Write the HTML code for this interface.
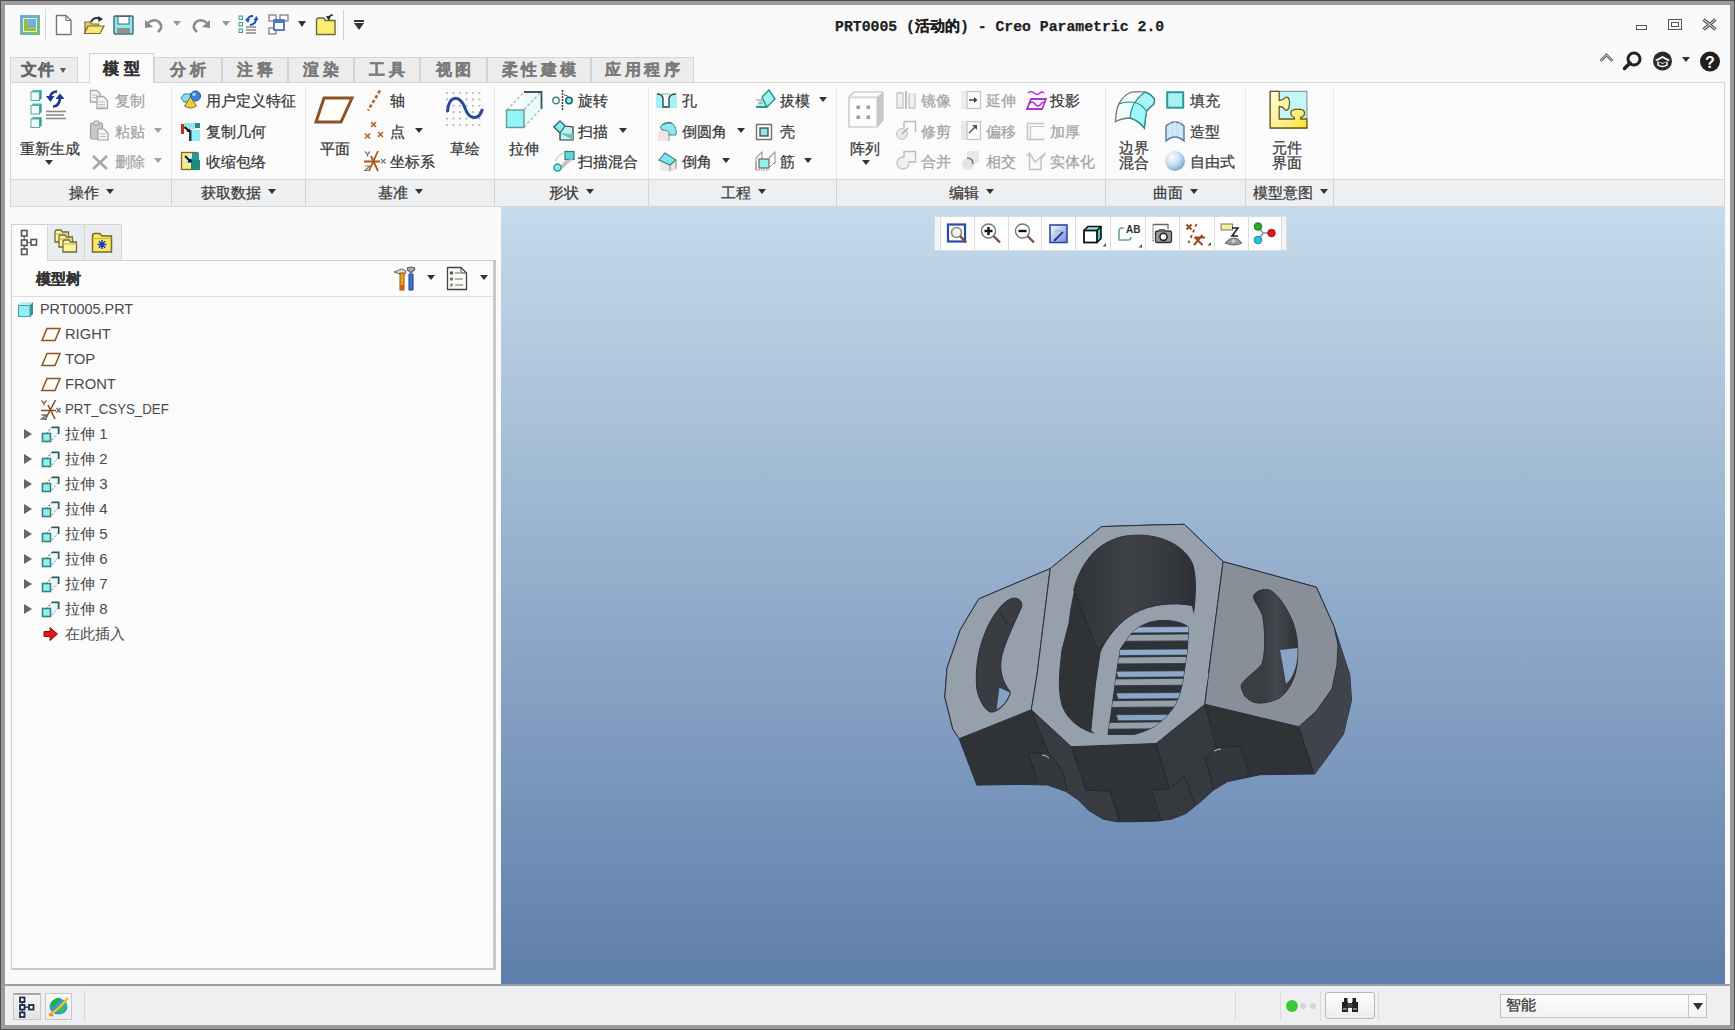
<!DOCTYPE html>
<html><head><meta charset="utf-8">
<style>
*{box-sizing:border-box;margin:0;padding:0}
html,body{width:1735px;height:1030px;overflow:hidden;background:#4f4f4f;font-family:"Liberation Sans",sans-serif;color:#333}
.a{position:absolute}
svg.a{overflow:visible}
.t{position:absolute;white-space:nowrap;font-size:15px;line-height:16px;color:#3a3a3a;-webkit-text-stroke:0.25px currentColor}
.dis{color:#a3a3a3}
.tab{position:absolute;top:57px;height:25px;background:#ececec;border:1px solid #d4d4d4;border-bottom:none;font-size:16px;line-height:23px;text-align:center;color:#7a7a7a;font-weight:bold;letter-spacing:3.5px;padding-left:3.5px;-webkit-text-stroke:0.3px currentColor}
.gl{position:absolute;top:180px;height:26px;font-size:15px;line-height:25px;text-align:center;color:#3a3a3a}
.tr{position:absolute;white-space:nowrap;font-size:15px;line-height:16px;color:#4a4a4a}
</style></head><body>

<div class="a" style="left:1px;top:1px;width:1733px;height:1028px;background:#9b9b9b"></div>
<div class="a" style="left:5px;top:5px;width:1725px;height:1020px;background:#fafafa"></div>
<div class="t" style="left:835px;top:19px;font-family:'Liberation Mono',monospace;font-weight:bold;font-size:14.8px;color:#1e1e1e;letter-spacing:0px">PRT0005 (活动的) - Creo Parametric 2.0</div>
<svg class="a" style="left:19px;top:14px" width="22" height="22" viewBox="0 0 22 22"><defs><linearGradient id="lg1" x1="0" y1="0" x2="1" y2="1"><stop offset="0" stop-color="#6aa8e8"/><stop offset="1" stop-color="#7cc060"/></linearGradient></defs><rect x="1" y="1" width="20" height="20" fill="url(#lg1)"/><rect x="4" y="4" width="14" height="14" fill="#d8f0f0"/><path d="M5 5 h3 v9 h9 v3 h-12z" fill="#90c830"/><rect x="9" y="5" width="8" height="8" fill="#60b8e0"/><path d="M8 13 h9 M8 5 v9" stroke="#e07040" stroke-width="1"/></svg>
<div class="a" style="left:45px;top:9px;width:1px;height:31px;background:#d6d6d6"></div>
<svg class="a" style="left:55px;top:14px" width="18" height="22" viewBox="0 0 18 22"><path d="M1.5 1.5 H11 L16 6.5 V20.5 H1.5 Z" fill="#fff" stroke="#777" stroke-width="1.4"/><path d="M11 1.5 V6.5 H16" fill="none" stroke="#777" stroke-width="1.2"/></svg>
<svg class="a" style="left:83px;top:14px" width="23" height="22" viewBox="0 0 23 22"><path d="M2 8 h5 l1.5 2 h7 v9 h-13.5z" fill="#e8d060" stroke="#7a6a30" stroke-width="1.2"/><path d="M1.5 19.5 L5 12 H21 L17 19.5 Z" fill="#fbe878" stroke="#7a6a30" stroke-width="1.2"/><path d="M8 8 q3 -6 9 -3" fill="none" stroke="#333" stroke-width="2"/><path d="M15 2 l5 3 l-4.5 3z" fill="#333"/></svg>
<svg class="a" style="left:113px;top:15px" width="21" height="20" viewBox="0 0 21 20"><rect x="1" y="1" width="19" height="18" rx="1" fill="#8ee8f0" stroke="#3a6a70" stroke-width="1.4"/><rect x="5" y="1.5" width="11" height="7.5" fill="#fff" stroke="#3a6a70" stroke-width="1"/><rect x="4" y="13" width="13" height="5.5" fill="#909090"/></svg>
<svg class="a" style="left:144px;top:17px" width="21" height="16" viewBox="0 0 21 16"><path d="M4 6 q6 -5 11 -1 q5 5 -1 10" fill="none" stroke="#8a8a8a" stroke-width="2.6"/><path d="M1 3 l0 8 l8 -1 z" fill="#8a8a8a"/></svg>
<div class="a" style="left:173px;top:21px;width:0;height:0;border-left:4.0px solid transparent;border-right:4.0px solid transparent;border-top:5px solid #999"></div>
<svg class="a" style="left:190px;top:17px" width="21" height="16" viewBox="0 0 21 16"><path d="M17 6 q-6 -5 -11 -1 q-5 5 1 10" fill="none" stroke="#8a8a8a" stroke-width="2.6"/><path d="M20 3 l0 8 l-8 -1 z" fill="#8a8a8a"/></svg>
<div class="a" style="left:222px;top:21px;width:0;height:0;border-left:4.0px solid transparent;border-right:4.0px solid transparent;border-top:5px solid #999"></div>
<svg class="a" style="left:238px;top:14px" width="20" height="21" viewBox="0 0 20 21"><g fill="#c8f4f4" stroke="#4a9a9a" stroke-width="1"><rect x="1" y="2" width="3.5" height="3.5"/><rect x="1" y="8.5" width="3.5" height="3.5"/><rect x="1" y="15" width="3.5" height="3.5"/></g><path d="M8 13 h10 M8 16 h10 M8 19 h10" stroke="#888" stroke-width="1.3"/><path d="M9 7 q1 -5 6 -5" fill="none" stroke="#1a50c0" stroke-width="2"/><path d="M7 5 l3 4 l2 -4z" fill="#1a50c0"/><path d="M18 5 q0 5 -6 6" fill="none" stroke="#1a50c0" stroke-width="2"/><path d="M15.5 6 l3 -4 l2 4z" fill="#1a50c0"/></svg>
<svg class="a" style="left:268px;top:14px" width="21" height="21" viewBox="0 0 21 21"><g fill="#fff" stroke="#777" stroke-width="1.2"><rect x="1" y="1" width="7" height="6"/><rect x="12" y="1" width="8" height="6"/><rect x="1" y="14" width="7" height="6"/></g><rect x="6" y="6" width="10" height="10" fill="#fff" stroke="#3a60b0" stroke-width="1.6"/><rect x="6" y="6" width="10" height="3" fill="#4a78d0"/></svg>
<div class="a" style="left:298px;top:21px;width:0;height:0;border-left:4.0px solid transparent;border-right:4.0px solid transparent;border-top:6px solid #333"></div>
<svg class="a" style="left:315px;top:13px" width="22" height="23" viewBox="0 0 22 23"><path d="M1.5 7 q0-2 2-2 h5 l2 2.5 h9.5 v14 h-18.5z" fill="#f8ee70" stroke="#6e6a3a" stroke-width="1.4"/><path d="M13 6 q1 -4 5 -4" fill="none" stroke="#333" stroke-width="1.6"/><path d="M11 3 l3 5 l2 -5z" fill="#333"/></svg>
<div class="a" style="left:343px;top:10px;width:1px;height:30px;background:#d0d0d0"></div>
<div class="a" style="left:354px;top:20px;width:10px;height:1.5px;background:#333"></div>
<div class="a" style="left:354px;top:23px;width:0;height:0;border-left:5.0px solid transparent;border-right:5.0px solid transparent;border-top:7px solid #333"></div>
<div class="a" style="left:1636px;top:25px;width:11px;height:5px;border:1.5px solid #555"></div>
<div class="a" style="left:1668px;top:19px;width:14px;height:11px;border:1.5px solid #555"></div>
<div class="a" style="left:1671px;top:22px;width:8px;height:5px;border:1.5px solid #555"></div>
<svg class="a" style="left:1702px;top:18px" width="15" height="13" viewBox="0 0 15 13"><path d="M1.5 1.5 L13.5 11.5 M13.5 1.5 L1.5 11.5" stroke="#555" stroke-width="3.2"/><path d="M1.5 1.5 L13.5 11.5 M13.5 1.5 L1.5 11.5" stroke="#fafafa" stroke-width="1"/></svg>
<svg class="a" style="left:1599px;top:53px" width="15" height="10" viewBox="0 0 15 10"><path d="M1.5 8 L7.5 2 L13.5 8" fill="none" stroke="#555" stroke-width="2.6"/><path d="M1.5 8 L7.5 2 L13.5 8" fill="none" stroke="#fafafa" stroke-width="0.9"/></svg>
<svg class="a" style="left:1622px;top:51px" width="20" height="20" viewBox="0 0 20 20"><circle cx="12" cy="8" r="6" fill="none" stroke="#222" stroke-width="3"/><path d="M8 12 L2.5 17.5" stroke="#222" stroke-width="3.5" stroke-linecap="round"/></svg>
<svg class="a" style="left:1652px;top:51px" width="21" height="20" viewBox="0 0 21 20"><circle cx="10.5" cy="10" r="9.5" fill="#2a2a2a"/><path d="M3 9 L10.5 5 L18 9 L10.5 13 Z" fill="#fff"/><path d="M6 11 v3 q4.5 3 9 0 v-3" fill="none" stroke="#fff" stroke-width="1.5"/><path d="M5 10 L10.5 7 L16 10 L10.5 12Z" fill="#2a2a2a"/></svg>
<div class="a" style="left:1682px;top:57px;width:0;height:0;border-left:4.0px solid transparent;border-right:4.0px solid transparent;border-top:5px solid #333"></div>
<svg class="a" style="left:1699px;top:51px" width="22" height="21" viewBox="0 0 22 21"><circle cx="11" cy="10.5" r="10" fill="#1e1e1e"/><text x="11" y="16.5" text-anchor="middle" font-family="Liberation Sans" font-weight="bold" font-size="16" fill="#fff">?</text></svg>
<div class="tab" style="left:10px;width:68px;letter-spacing:1px;padding-left:0;text-align:left;padding-left:10px;color:#666">文件</div>
<div class="a" style="left:60px;top:68px;width:0;height:0;border-left:3.5px solid transparent;border-right:3.5px solid transparent;border-top:5px solid #555"></div>
<div class="tab" style="left:154px;width:68px">分析</div>
<div class="tab" style="left:222px;width:66px">注释</div>
<div class="tab" style="left:288px;width:66px">渲染</div>
<div class="tab" style="left:354px;width:66px">工具</div>
<div class="tab" style="left:420px;width:67px">视图</div>
<div class="tab" style="left:487px;width:104px">柔性建模</div>
<div class="tab" style="left:591px;width:103px">应用程序</div>
<div class="a" style="left:10px;top:82px;width:1715px;height:125px;border:1px solid #d6d6d6;background:#fbfbfb"></div>
<div class="a" style="left:11px;top:179px;width:1713px;height:27px;background:#eeeff1;border-top:1px solid #d8d8d8"></div>
<div class="tab" style="left:89px;top:53px;height:30px;width:65px;background:#fbfbfb;color:#333;line-height:30px;border-color:#d0d0d0;letter-spacing:4.5px;padding-left:4.5px">模型</div>
<div class="a" style="left:171px;top:87px;width:1px;height:92px;background:#e8e8e8"></div>
<div class="a" style="left:171px;top:180px;width:1px;height:26px;background:#d2d2d2"></div>
<div class="a" style="left:305px;top:87px;width:1px;height:92px;background:#e8e8e8"></div>
<div class="a" style="left:305px;top:180px;width:1px;height:26px;background:#d2d2d2"></div>
<div class="a" style="left:494px;top:87px;width:1px;height:92px;background:#e8e8e8"></div>
<div class="a" style="left:494px;top:180px;width:1px;height:26px;background:#d2d2d2"></div>
<div class="a" style="left:648px;top:87px;width:1px;height:92px;background:#e8e8e8"></div>
<div class="a" style="left:648px;top:180px;width:1px;height:26px;background:#d2d2d2"></div>
<div class="a" style="left:836px;top:87px;width:1px;height:92px;background:#e8e8e8"></div>
<div class="a" style="left:836px;top:180px;width:1px;height:26px;background:#d2d2d2"></div>
<div class="a" style="left:1105px;top:87px;width:1px;height:92px;background:#e8e8e8"></div>
<div class="a" style="left:1105px;top:180px;width:1px;height:26px;background:#d2d2d2"></div>
<div class="a" style="left:1245px;top:87px;width:1px;height:92px;background:#e8e8e8"></div>
<div class="a" style="left:1245px;top:180px;width:1px;height:26px;background:#d2d2d2"></div>
<div class="a" style="left:1333px;top:87px;width:1px;height:92px;background:#e8e8e8"></div>
<div class="a" style="left:1333px;top:180px;width:1px;height:26px;background:#d2d2d2"></div>
<div class="t " style="left:69px;top:185px;">操作</div>
<div class="a" style="left:106px;top:189px;width:0;height:0;border-left:4.0px solid transparent;border-right:4.0px solid transparent;border-top:5px solid #333"></div>
<div class="t " style="left:201px;top:185px;">获取数据</div>
<div class="a" style="left:268px;top:189px;width:0;height:0;border-left:4.0px solid transparent;border-right:4.0px solid transparent;border-top:5px solid #333"></div>
<div class="t " style="left:378px;top:185px;">基准</div>
<div class="a" style="left:415px;top:189px;width:0;height:0;border-left:4.0px solid transparent;border-right:4.0px solid transparent;border-top:5px solid #333"></div>
<div class="t " style="left:549px;top:185px;">形状</div>
<div class="a" style="left:586px;top:189px;width:0;height:0;border-left:4.0px solid transparent;border-right:4.0px solid transparent;border-top:5px solid #333"></div>
<div class="t " style="left:721px;top:185px;">工程</div>
<div class="a" style="left:758px;top:189px;width:0;height:0;border-left:4.0px solid transparent;border-right:4.0px solid transparent;border-top:5px solid #333"></div>
<div class="t " style="left:949px;top:185px;">编辑</div>
<div class="a" style="left:986px;top:189px;width:0;height:0;border-left:4.0px solid transparent;border-right:4.0px solid transparent;border-top:5px solid #333"></div>
<div class="t " style="left:1153px;top:185px;">曲面</div>
<div class="a" style="left:1190px;top:189px;width:0;height:0;border-left:4.0px solid transparent;border-right:4.0px solid transparent;border-top:5px solid #333"></div>
<div class="t " style="left:1253px;top:185px;">模型意图</div>
<div class="a" style="left:1320px;top:189px;width:0;height:0;border-left:4.0px solid transparent;border-right:4.0px solid transparent;border-top:5px solid #333"></div>
<div class="t " style="left:20px;top:141px;">重新生成</div>
<div class="a" style="left:45px;top:160px;width:0;height:0;border-left:4.0px solid transparent;border-right:4.0px solid transparent;border-top:5px solid #333"></div>
<div class="t dis" style="left:115px;top:93px;">复制</div>
<div class="t dis" style="left:115px;top:124px;">粘贴</div>
<div class="t dis" style="left:115px;top:154px;">删除</div>
<div class="a" style="left:154px;top:128px;width:0;height:0;border-left:4.0px solid transparent;border-right:4.0px solid transparent;border-top:5px solid #a0a0a0"></div>
<div class="a" style="left:154px;top:158px;width:0;height:0;border-left:4.0px solid transparent;border-right:4.0px solid transparent;border-top:5px solid #a0a0a0"></div>
<div class="t " style="left:206px;top:93px;">用户定义特征</div>
<div class="t " style="left:206px;top:124px;">复制几何</div>
<div class="t " style="left:206px;top:154px;">收缩包络</div>
<div class="t " style="left:320px;top:141px;">平面</div>
<div class="t " style="left:390px;top:93px;">轴</div>
<div class="t " style="left:390px;top:124px;">点</div>
<div class="a" style="left:415px;top:128px;width:0;height:0;border-left:4.0px solid transparent;border-right:4.0px solid transparent;border-top:5px solid #333"></div>
<div class="t " style="left:390px;top:154px;">坐标系</div>
<div class="t " style="left:450px;top:141px;">草绘</div>
<div class="t " style="left:509px;top:141px;">拉伸</div>
<div class="t " style="left:578px;top:93px;">旋转</div>
<div class="t " style="left:578px;top:124px;">扫描</div>
<div class="a" style="left:619px;top:128px;width:0;height:0;border-left:4.0px solid transparent;border-right:4.0px solid transparent;border-top:5px solid #333"></div>
<div class="t " style="left:578px;top:154px;">扫描混合</div>
<div class="t " style="left:682px;top:93px;">孔</div>
<div class="t " style="left:682px;top:124px;">倒圆角</div>
<div class="a" style="left:737px;top:128px;width:0;height:0;border-left:4.0px solid transparent;border-right:4.0px solid transparent;border-top:5px solid #333"></div>
<div class="t " style="left:682px;top:154px;">倒角</div>
<div class="a" style="left:722px;top:158px;width:0;height:0;border-left:4.0px solid transparent;border-right:4.0px solid transparent;border-top:5px solid #333"></div>
<div class="t " style="left:780px;top:93px;">拔模</div>
<div class="a" style="left:819px;top:97px;width:0;height:0;border-left:4.0px solid transparent;border-right:4.0px solid transparent;border-top:5px solid #333"></div>
<div class="t " style="left:780px;top:124px;">壳</div>
<div class="t " style="left:780px;top:154px;">筋</div>
<div class="a" style="left:804px;top:158px;width:0;height:0;border-left:4.0px solid transparent;border-right:4.0px solid transparent;border-top:5px solid #333"></div>
<div class="t " style="left:850px;top:141px;">阵列</div>
<div class="a" style="left:862px;top:160px;width:0;height:0;border-left:4.0px solid transparent;border-right:4.0px solid transparent;border-top:5px solid #333"></div>
<div class="t dis" style="left:921px;top:93px;">镜像</div>
<div class="t dis" style="left:921px;top:124px;">修剪</div>
<div class="t dis" style="left:921px;top:154px;">合并</div>
<div class="t dis" style="left:986px;top:93px;">延伸</div>
<div class="t dis" style="left:986px;top:124px;">偏移</div>
<div class="t dis" style="left:986px;top:154px;">相交</div>
<div class="t " style="left:1050px;top:93px;">投影</div>
<div class="t dis" style="left:1050px;top:124px;">加厚</div>
<div class="t dis" style="left:1050px;top:154px;">实体化</div>
<div class="t" style="left:1119px;top:140px;line-height:15px">边界<br>混合</div>
<div class="t " style="left:1190px;top:93px;">填充</div>
<div class="t " style="left:1190px;top:124px;">造型</div>
<div class="t " style="left:1190px;top:154px;">自由式</div>
<div class="t" style="left:1272px;top:140px;line-height:15px">元件<br>界面</div>
<svg class="a" style="left:30px;top:89px" width="40" height="41" viewBox="0 0 40 41"><path d="M1 3 L3 1 H11.5 V9.5 L9.5 11.5 H1 Z" fill="#3cc0b0"/><rect x="1" y="3" width="8.5" height="8.5" fill="#f0fcfc" stroke="#5aa8a8" stroke-width="1"/><path d="M9.5 3 L11.5 1 V9.5 L9.5 11.5Z" fill="#2aa898"/><path d="M1 16.5 L3 14.5 H11.5 V23.0 L9.5 25.0 H1 Z" fill="#3cc0b0"/><rect x="1" y="16.5" width="8.5" height="8.5" fill="#f0fcfc" stroke="#5aa8a8" stroke-width="1"/><path d="M9.5 16.5 L11.5 14.5 V23.0 L9.5 25.0Z" fill="#2aa898"/><path d="M1 30 L3 28 H11.5 V36.5 L9.5 38.5 H1 Z" fill="#3cc0b0"/><rect x="1" y="30" width="8.5" height="8.5" fill="#f0fcfc" stroke="#5aa8a8" stroke-width="1"/><path d="M9.5 30 L11.5 28 V36.5 L9.5 38.5Z" fill="#2aa898"/><path d="M16 22.5 H36 M16 26 H34 M16 29.5 H36" stroke="#888" stroke-width="1.4"/><path d="M27 2.5 q-6 0 -7 6" fill="none" stroke="#1a3a90" stroke-width="2.6"/><path d="M16 7 l4.5 6 l4 -6z" fill="#1a3a90"/><path d="M23 17.5 q6 0 7 -8" fill="none" stroke="#1a3a90" stroke-width="2.6"/><path d="M25.5 10 l4.5 -5.5 l4.5 5.5z" fill="#1a3a90"/></svg>
<svg class="a" style="left:89px;top:89px" width="21" height="21" viewBox="0 0 21 21"><path d="M1.5 1.5 H8 L11 4.5 V13 H1.5 Z" fill="#f4f4f4" stroke="#a8a8a8" stroke-width="1.3"/><path d="M3.5 6 h5 M3.5 8.5 h5" stroke="#bbb" stroke-width="1"/><path d="M8 7.5 H14.5 L18.5 11.5 V19.5 H8 Z" fill="#f4f4f4" stroke="#a8a8a8" stroke-width="1.3"/><path d="M10 13 h6 M10 15.5 h6 M10 18 h6" stroke="#bbb" stroke-width="1"/></svg>
<svg class="a" style="left:89px;top:120px" width="21" height="21" viewBox="0 0 21 21"><rect x="1.5" y="3" width="12" height="16" rx="1.5" fill="#c8c8c8" stroke="#a0a0a0" stroke-width="1.2"/><rect x="5" y="1" width="5" height="4" rx="1" fill="#ddd" stroke="#999" stroke-width="1"/><path d="M9 9 H15 L19 13 V20 H9 Z" fill="#f6f6f6" stroke="#a0a0a0" stroke-width="1.2"/><path d="M11 14 h6 M11 16.5 h6" stroke="#bbb" stroke-width="1"/></svg>
<svg class="a" style="left:91px;top:154px" width="19" height="17" viewBox="0 0 19 17"><path d="M2 2 L16 15 M16 2 L2 15" stroke="#a6a6a6" stroke-width="2.4"/></svg>
<svg class="a" style="left:180px;top:90px" width="22" height="20" viewBox="0 0 22 20"><path d="M1 8 L4 4 H11 L14 8 L11 12 H4 Z" fill="#7ee0e8" stroke="#3a8a90" stroke-width="1"/><circle cx="15.5" cy="6" r="5" fill="#3a80e0" stroke="#1a4a90" stroke-width="1"/><circle cx="14" cy="4.5" r="1.8" fill="#a0d0ff"/><path d="M10.5 7 L4.5 16 Q10.5 20 16.5 16 Z" fill="#e8d040" stroke="#7a6a20" stroke-width="1"/></svg>
<svg class="a" style="left:180px;top:121px" width="22" height="21" viewBox="0 0 22 21"><rect x="1" y="3" width="3" height="10" fill="#c03020"/><rect x="4" y="2" width="11" height="6" fill="#8ee8ee"/><rect x="15" y="2" width="5" height="5" fill="#2a8a80"/><rect x="9" y="9" width="11" height="11" fill="#90eef4"/><rect x="9" y="9" width="2.5" height="11" fill="#2a4040"/><path d="M4.5 6 L9 10" stroke="#111" stroke-width="2"/><path d="M6.5 11 L10 11 L10 7.5z" fill="#111"/></svg>
<svg class="a" style="left:180px;top:151px" width="22" height="21" viewBox="0 0 22 21"><rect x="1.5" y="1.5" width="16" height="17" fill="#f8ec80" stroke="#7a6a30" stroke-width="1.3"/><rect x="5" y="4" width="10" height="9" fill="#cdf4f4"/><rect x="12" y="2" width="7" height="7" fill="#2a9a90"/><rect x="11" y="9" width="9" height="10" fill="#1f8a80"/><path d="M5 5 L10.5 10.5" stroke="#111" stroke-width="2"/><path d="M7 11.5 L11.5 11.5 L11.5 7z" fill="#111"/></svg>
<svg class="a" style="left:313px;top:95px" width="42" height="30" viewBox="0 0 42 30"><path d="M11 3 H39 L28 27 H3 Z" fill="#fffdf6" stroke="#8a5428" stroke-width="3"/></svg>
<svg class="a" style="left:365px;top:89px" width="18" height="23" viewBox="0 0 18 23"><path d="M15 1.5 L3 21.5" stroke="#b86a30" stroke-width="2.6" stroke-dasharray="3.5 2"/></svg>
<svg class="a" style="left:364px;top:121px" width="22" height="21" viewBox="0 0 22 21"><g stroke="#b8642a" stroke-width="1.7"><path d="M7 1 l5 5 M12 1 l-5 5 M1 12.5 l5 5 M6 12.5 l-5 5 M14 11 l5 5 M19 11 l-5 5"/></g></svg>
<svg class="a" style="left:363px;top:150px" width="24" height="22" viewBox="0 0 24 22"><g stroke="#a85a20" stroke-width="1.8" fill="none"><path d="M1 11.5 H17 M15 1 L6 21 M8 6 L15 21"/></g><g stroke="#777" stroke-width="1.2" fill="none"><path d="M2 1.5 l2.5 3 l2.5 -3 M4.5 4.5 v2 M2 16 h5 l-5 4.5 h5 M18 9 l4.5 4.5 M22.5 9 l-4.5 4.5"/></g></svg>
<svg class="a" style="left:445px;top:91px" width="40" height="37" viewBox="0 0 40 37"><circle cx="2.0" cy="2.0" r="1.1" fill="#b8b8b8"/><circle cx="8.5" cy="2.0" r="1.1" fill="#b8b8b8"/><circle cx="15.0" cy="2.0" r="1.1" fill="#b8b8b8"/><circle cx="21.5" cy="2.0" r="1.1" fill="#b8b8b8"/><circle cx="28.0" cy="2.0" r="1.1" fill="#b8b8b8"/><circle cx="34.5" cy="2.0" r="1.1" fill="#b8b8b8"/><circle cx="2.0" cy="8.4" r="1.1" fill="#b8b8b8"/><circle cx="8.5" cy="8.4" r="1.1" fill="#b8b8b8"/><circle cx="15.0" cy="8.4" r="1.1" fill="#b8b8b8"/><circle cx="21.5" cy="8.4" r="1.1" fill="#b8b8b8"/><circle cx="28.0" cy="8.4" r="1.1" fill="#b8b8b8"/><circle cx="34.5" cy="8.4" r="1.1" fill="#b8b8b8"/><circle cx="2.0" cy="14.8" r="1.1" fill="#b8b8b8"/><circle cx="8.5" cy="14.8" r="1.1" fill="#b8b8b8"/><circle cx="15.0" cy="14.8" r="1.1" fill="#b8b8b8"/><circle cx="21.5" cy="14.8" r="1.1" fill="#b8b8b8"/><circle cx="28.0" cy="14.8" r="1.1" fill="#b8b8b8"/><circle cx="34.5" cy="14.8" r="1.1" fill="#b8b8b8"/><circle cx="2.0" cy="21.200000000000003" r="1.1" fill="#b8b8b8"/><circle cx="8.5" cy="21.200000000000003" r="1.1" fill="#b8b8b8"/><circle cx="15.0" cy="21.200000000000003" r="1.1" fill="#b8b8b8"/><circle cx="21.5" cy="21.200000000000003" r="1.1" fill="#b8b8b8"/><circle cx="28.0" cy="21.200000000000003" r="1.1" fill="#b8b8b8"/><circle cx="34.5" cy="21.200000000000003" r="1.1" fill="#b8b8b8"/><circle cx="2.0" cy="27.6" r="1.1" fill="#b8b8b8"/><circle cx="8.5" cy="27.6" r="1.1" fill="#b8b8b8"/><circle cx="15.0" cy="27.6" r="1.1" fill="#b8b8b8"/><circle cx="21.5" cy="27.6" r="1.1" fill="#b8b8b8"/><circle cx="28.0" cy="27.6" r="1.1" fill="#b8b8b8"/><circle cx="34.5" cy="27.6" r="1.1" fill="#b8b8b8"/><circle cx="2.0" cy="34.0" r="1.1" fill="#b8b8b8"/><circle cx="8.5" cy="34.0" r="1.1" fill="#b8b8b8"/><circle cx="15.0" cy="34.0" r="1.1" fill="#b8b8b8"/><circle cx="21.5" cy="34.0" r="1.1" fill="#b8b8b8"/><circle cx="28.0" cy="34.0" r="1.1" fill="#b8b8b8"/><circle cx="34.5" cy="34.0" r="1.1" fill="#b8b8b8"/><path d="M2.5 21 C4 2, 16 5, 20 17 S 34 30, 37.5 18" fill="none" stroke="#2a4a98" stroke-width="3"/></svg>
<svg class="a" style="left:504px;top:90px" width="40" height="40" viewBox="0 0 40 40"><path d="M20 1.5 H37.5 V19 L19.5 37" fill="#e4fafc" opacity=".8"/><path d="M3 20 L20 2 M20 19.5 L37 2 M20 37 L37 19" stroke="#b0b0b0" stroke-width="1.2" stroke-dasharray="3 2" fill="none"/><path d="M20 2 H37.5 V19" fill="none" stroke="#3a5656" stroke-width="1.8"/><rect x="2.5" y="20" width="17.5" height="17.5" fill="#94f4f6" stroke="#6a9898" stroke-width="1.4"/></svg>
<svg class="a" style="left:552px;top:90px" width="22" height="21" viewBox="0 0 22 21"><path d="M10.5 0 V21" stroke="#333" stroke-width="1.4" stroke-dasharray="2 1"/><circle cx="4" cy="10.5" r="3.2" fill="#fff" stroke="#3a8080" stroke-width="1.4"/><circle cx="17" cy="10.5" r="3.2" fill="#8ee8ee" stroke="#1a6a6a" stroke-width="1.6"/><path d="M12 5 q4 0 5 3" fill="none" stroke="#555" stroke-width="1"/></svg>
<svg class="a" style="left:553px;top:120px" width="23" height="22" viewBox="0 0 23 22"><path d="M1 7 L7 1 L12 6 L20 7 V20 L7 20 V13 Z" fill="#bff2f4" stroke="#333" stroke-width="1.2"/><path d="M7 13 L20 20 V14Z" fill="#70c0b8"/><path d="M1 7 L7 13 L12 6" fill="#d8c8c8" opacity=".6"/><path d="M1 7 L7 1 L12 6 L7 13 Z" fill="#8ee8ee" stroke="#2a7070" stroke-width="1.2"/></svg>
<svg class="a" style="left:553px;top:150px" width="23" height="22" viewBox="0 0 23 22"><rect x="12" y="1.5" width="9" height="8" fill="#60d8d8" stroke="#2a8080" stroke-width="1.2"/><path d="M4 19 L13 10 L20 9 L8 20Z" fill="#c8c0c0"/><circle cx="4.5" cy="17.5" r="3.5" fill="#8ee8ee" stroke="#2aa0a0" stroke-width="1.5"/><path d="M2 11 q5 -8 10 -8" stroke="#bbb" fill="none" stroke-width="1"/></svg>
<svg class="a" style="left:656px;top:92px" width="22" height="17" viewBox="0 0 22 17"><rect x="0" y="2" width="21" height="14" fill="#a8f0f4"/><path d="M1 2 Q6 2 7 6 V15 H13 V6 Q14 2 20 2" fill="#f8fdfd" stroke="#2a4a50" stroke-width="1.4"/><path d="M6 2 H14" stroke="#666" stroke-width="1" stroke-dasharray="1.5 1"/></svg>
<svg class="a" style="left:656px;top:121px" width="22" height="21" viewBox="0 0 22 21"><path d="M2 20 V12 Q3 9 6 8 L13 13 Q12 16 12 20 Z" fill="#efe8e2"/><path d="M4 6 Q10 0 17 3 Q21 7 20 14 L13 14 Q14 9 6 9 Z" fill="#90e8ee" stroke="#3a8a8a" stroke-width="1"/><path d="M6 4 Q11 0 16 2" fill="none" stroke="#3a8a8a" stroke-width="1.1"/><path d="M13 14 V20" stroke="#999" stroke-width="1"/></svg>
<svg class="a" style="left:656px;top:151px" width="22" height="21" viewBox="0 0 22 21"><path d="M4 20 V9 L9 4 L20 12 V20 Z" fill="#f0e8e4"/><path d="M3 9 L9 2 L20 9 L14 14 Z" fill="#80e4ec" stroke="#3a8080" stroke-width="1.1"/><path d="M14 14 V20 M20 9 V18" stroke="#888" stroke-width="1"/></svg>
<svg class="a" style="left:754px;top:89px" width="22" height="21" viewBox="0 0 22 21"><path d="M2 18 L8 8 L15 1 L21 10 L13 18 Z" fill="#a8f0f0"/><path d="M8 8 L15 1 L21 10 L13 18 L8 8" fill="none" stroke="#2a9a90" stroke-width="1.5"/><path d="M2 18 H13" stroke="#2a9a90" stroke-width="2"/><path d="M2 11 H8 M4 14 H9" stroke="#e07070" stroke-width="1"/></svg>
<svg class="a" style="left:755px;top:123px" width="19" height="18" viewBox="0 0 19 18"><rect x="1.5" y="1.5" width="15" height="15" fill="#fff" stroke="#777" stroke-width="1.5"/><rect x="5" y="5" width="8" height="8" fill="#8ee8ee" stroke="#444" stroke-width="1.3"/></svg>
<svg class="a" style="left:755px;top:150px" width="22" height="22" viewBox="0 0 22 22"><path d="M1 20 V8 L7 2 V14 M20 14 V2 L14 8" fill="none" stroke="#999" stroke-width="1.1"/><rect x="4" y="9" width="10" height="9" fill="#8ef0f0" stroke="#666" stroke-width="1.2"/><path d="M14 18 L20 12" stroke="#999" stroke-width="1"/><path d="M1 20 H14 M1 12 V20" stroke="#c06060" stroke-width="1" stroke-dasharray="1.5 1"/></svg>
<svg class="a" style="left:844px;top:86px" width="46" height="46" viewBox="0 0 46 46"><path d="M5 11 L10 6 H39 V34 L33 41 H5 Z" fill="#fdfdfd" stroke="#bdbdbd" stroke-width="1.2"/><path d="M33 11 L39 6 V34 L33 41 Z" fill="#c6c6c6"/><path d="M7 11 H33 V13 H7Z" fill="#eeeeee"/><path d="M5 11 H33 V41" fill="none" stroke="#c8c8c8" stroke-width="1"/><g fill="#9a9a9a"><rect x="12.5" y="19.5" width="3.5" height="3.5"/><rect x="22.5" y="19.5" width="3.5" height="3.5"/><rect x="12.5" y="29.5" width="3.5" height="3.5"/><rect x="22.5" y="29.5" width="3.5" height="3.5"/></g></svg>
<svg class="a" style="left:896px;top:90px" width="21" height="20" viewBox="0 0 21 20"><path d="M1 3 V18 H7 L7 3 Z M19 3 V18 H13 L13 3" fill="#f0f0f0" stroke="#c4c4c4" stroke-width="1.3"/><path d="M10 1 V19" stroke="#aaa" stroke-width="1.5"/></svg>
<svg class="a" style="left:896px;top:120px" width="21" height="21" viewBox="0 0 21 21"><circle cx="6" cy="14" r="5.5" fill="#e8e8e8" stroke="#c4c4c4" stroke-width="1"/><path d="M8 1.5 H19.5 V12 M8 1.5 V8" fill="none" stroke="#bbb" stroke-width="1.4"/><path d="M6 14 L12 8" stroke="#aaa" stroke-width="1.2"/></svg>
<svg class="a" style="left:896px;top:150px" width="21" height="21" viewBox="0 0 21 21"><circle cx="7" cy="13" r="6" fill="#f0f0f0" stroke="#c4c4c4" stroke-width="1.3"/><path d="M8 7 V1.5 H19.5 V12 H13" fill="#f6f6f6" stroke="#bbb" stroke-width="1.3"/></svg>
<svg class="a" style="left:960px;top:90px" width="22" height="20" viewBox="0 0 22 20"><rect x="1" y="1" width="8" height="18" fill="#eee"/><rect x="7" y="1.5" width="13.5" height="17" fill="#fbfbfb" stroke="#c4c4c4" stroke-width="1.2"/><path d="M9 10 H15" stroke="#444" stroke-width="1.5"/><path d="M14 7 L17.5 10 L14 13Z" fill="#444"/></svg>
<svg class="a" style="left:960px;top:120px" width="22" height="21" viewBox="0 0 22 21"><rect x="1" y="1" width="9" height="19" fill="#e8e8e8"/><rect x="7" y="1.5" width="13.5" height="18" fill="#fbfbfb" stroke="#c4c4c4" stroke-width="1.2"/><path d="M9 13 L15 7" stroke="#555" stroke-width="1.5"/><path d="M12 5 H17 V10Z" fill="#555"/></svg>
<svg class="a" style="left:960px;top:150px" width="22" height="21" viewBox="0 0 22 21"><rect x="7" y="1" width="12" height="12" fill="#e8e8e8"/><circle cx="8" cy="14" r="6" fill="#e4e4e4"/><path d="M7 8 q6 0 6 6" fill="none" stroke="#777" stroke-width="1.6"/></svg>
<svg class="a" style="left:1025px;top:90px" width="22" height="21" viewBox="0 0 22 21"><path d="M3 3 q3 -3 6 0 q3 3 6 0 q2 -2 4 0" fill="none" stroke="#b030d0" stroke-width="1.6"/><path d="M6 9 L2 19 H17 L21 9 Z" fill="none" stroke="#b030d0" stroke-width="1.8"/><path d="M4 14 q3 -4 6 0 q3 4 6 0 q2 -3 4 -1" fill="none" stroke="#b030d0" stroke-width="1.5"/></svg>
<svg class="a" style="left:1026px;top:122px" width="20" height="19" viewBox="0 0 20 19"><path d="M1.5 17.5 V1.5 H18.5" fill="none" stroke="#c4c4c4" stroke-width="1.6"/><path d="M4.5 17.5 V4.5 H18.5" fill="none" stroke="#c4c4c4" stroke-width="1.2"/><path d="M1.5 17.5 H18.5" stroke="#c4c4c4" stroke-width="1.6"/></svg>
<svg class="a" style="left:1025px;top:151px" width="22" height="20" viewBox="0 0 22 20"><path d="M1.5 5 L4.5 2 V18.5 H16 V8 L20.5 2 L17 5 L10 11 L4.5 2" fill="#f8f8f8" stroke="#c4c4c4" stroke-width="1.5"/></svg>
<svg class="a" style="left:1110px;top:86px" width="50" height="46" viewBox="0 0 50 46"><path d="M5.4 35.7 Q6 24 8.9 17.9 Q14 8 22.3 5.8 H34.8 Q41 8 44.6 13.4 L43.8 17.9 Q39 22 36.6 25 Q35 34 34.4 42 Q28 34 20 32 Q12 32 5.4 35.7Z" fill="#eefcfc" stroke="#777" stroke-width="1.3"/><path d="M25 16.5 Q29 10 34.8 6.5 Q41 8 44.6 13.4 L43.8 17.9 Q39 22 36.6 25 Q31 18 25 16.5Z" fill="#a6f4f6"/><path d="M25 16.5 Q31 18 36.6 25 Q35 34 34.4 42 Q28 34 20 32 Q21 22 25 16.5Z" fill="#a0f6f8"/><path d="M8.9 17.9 Q16 15 25 16.5 Q31 18 36.6 25 M34.8 6.5 Q29 10 25 16.5 Q21 22 20 32" fill="none" stroke="#2a8a8a" stroke-width="1.2"/><path d="M34.8 5.8 Q41 8 44.6 13.4 L43.8 17.9 Q39 22 36.6 25 Q35 34 34.4 42 Q28 34 20 32" fill="none" stroke="#2a8a8a" stroke-width="1.3"/></svg>
<svg class="a" style="left:1166px;top:91px" width="19" height="18" viewBox="0 0 19 18"><rect x="1.2" y="1.2" width="16" height="15.5" fill="#a8f2f4" stroke="#2a9a9a" stroke-width="2"/></svg>
<svg class="a" style="left:1164px;top:120px" width="23" height="22" viewBox="0 0 23 22"><path d="M2 6 Q11 -2 20 6 V21 Q11 13 2 21 Z" fill="#c8e4f4" stroke="#5a7a9a" stroke-width="1.4"/><path d="M6 3 V17 M11 2 V15 M16 3 V17" stroke="#fff" stroke-width="1" stroke-dasharray="1 1.5"/></svg>
<svg class="a" style="left:1164px;top:150px" width="22" height="22" viewBox="0 0 22 22"><defs><radialGradient id="sph" cx=".35" cy=".3" r=".8"><stop offset="0" stop-color="#ffffff"/><stop offset=".55" stop-color="#c0d8f0"/><stop offset="1" stop-color="#6a9ad0"/></radialGradient></defs><circle cx="11" cy="11" r="10" fill="url(#sph)"/></svg>
<svg class="a" style="left:1264px;top:86px" width="50" height="46" viewBox="0 0 50 46"><defs><linearGradient id="ylg" x1="0" y1="0" x2="1" y2="1"><stop offset="0" stop-color="#fffbd8"/><stop offset=".6" stop-color="#fff08a"/><stop offset="1" stop-color="#ffe420"/></linearGradient></defs><rect x="6.2" y="5.4" width="36.7" height="36.6" fill="#c4f6fa" stroke="#8a9aa0" stroke-width="1.2"/><path d="M6.2 5.4 H15.2 V14.5 Q20 13.5 20 12.5 Q22 10.5 24 11.5 Q26 14 25.5 17.5 Q25.5 22 23.5 24 Q21 25 19.5 22 Q18 20.5 15.2 20.5 V33 H30.5 Q31 31.5 28 30 Q25.5 27 28 24.5 Q33 22 39 24 Q41.5 26 40 29.5 Q38.5 31 36.6 31.5 V33 H42.9 V42 H6.2 Z" fill="url(#ylg)" stroke="#6a5a20" stroke-width="1.3" stroke-linejoin="round"/></svg>
<div class="a" style="left:11px;top:224px;width:37px;height:37px;background:#fbfbfb;border:1px solid #d0d0d0;border-bottom:none"></div>
<div class="a" style="left:47px;top:224px;width:38px;height:36px;background:#ebecef;border:1px solid #d6d6d6;border-bottom:none"></div>
<div class="a" style="left:84px;top:224px;width:38px;height:36px;background:#ebecef;border:1px solid #d6d6d6;border-bottom:none"></div>
<div class="a" style="left:11px;top:260px;width:485px;height:710px;border:1px solid #d0d0d0;border-right:3px solid #c8c8c8;border-bottom:2px solid #c8c8c8;background:#fbfbfb"></div>
<div class="a" style="left:12px;top:260px;width:35px;height:2px;background:#fbfbfb"></div>
<div class="a" style="left:12px;top:296px;width:481px;height:1px;background:#dcdcdc"></div>
<div class="t" style="left:36px;top:271px;font-weight:bold;color:#333">模型树</div>
<div class="tr" style="left:40px;top:301px;transform:scaleX(0.96);transform-origin:0 0;">PRT0005.PRT</div>
<div class="tr" style="left:65px;top:326px;transform:scaleX(0.98);transform-origin:0 0;">RIGHT</div>
<div class="tr" style="left:65px;top:351px;transform:scaleX(0.99);transform-origin:0 0;">TOP</div>
<div class="tr" style="left:65px;top:376px;transform:scaleX(0.985);transform-origin:0 0;">FRONT</div>
<div class="tr" style="left:65px;top:401px;transform:scaleX(0.885);transform-origin:0 0;">PRT_CSYS_DEF</div>
<div class="tr" style="left:65px;top:426px;">拉伸 1</div>
<div class="a" style="left:24px;top:429px;width:0;height:0;border-top:5px solid transparent;border-bottom:5px solid transparent;border-left:8px solid #666"></div>
<div class="tr" style="left:65px;top:451px;">拉伸 2</div>
<div class="a" style="left:24px;top:454px;width:0;height:0;border-top:5px solid transparent;border-bottom:5px solid transparent;border-left:8px solid #666"></div>
<div class="tr" style="left:65px;top:476px;">拉伸 3</div>
<div class="a" style="left:24px;top:479px;width:0;height:0;border-top:5px solid transparent;border-bottom:5px solid transparent;border-left:8px solid #666"></div>
<div class="tr" style="left:65px;top:501px;">拉伸 4</div>
<div class="a" style="left:24px;top:504px;width:0;height:0;border-top:5px solid transparent;border-bottom:5px solid transparent;border-left:8px solid #666"></div>
<div class="tr" style="left:65px;top:526px;">拉伸 5</div>
<div class="a" style="left:24px;top:529px;width:0;height:0;border-top:5px solid transparent;border-bottom:5px solid transparent;border-left:8px solid #666"></div>
<div class="tr" style="left:65px;top:551px;">拉伸 6</div>
<div class="a" style="left:24px;top:554px;width:0;height:0;border-top:5px solid transparent;border-bottom:5px solid transparent;border-left:8px solid #666"></div>
<div class="tr" style="left:65px;top:576px;">拉伸 7</div>
<div class="a" style="left:24px;top:579px;width:0;height:0;border-top:5px solid transparent;border-bottom:5px solid transparent;border-left:8px solid #666"></div>
<div class="tr" style="left:65px;top:601px;">拉伸 8</div>
<div class="a" style="left:24px;top:604px;width:0;height:0;border-top:5px solid transparent;border-bottom:5px solid transparent;border-left:8px solid #666"></div>
<div class="tr" style="left:65px;top:626px;">在此插入</div>
<svg class="a" style="left:20px;top:229px" width="19" height="27" viewBox="0 0 19 27"><g fill="#fff" stroke="#555" stroke-width="1.6"><rect x="1.5" y="1.5" width="5.5" height="5.5"/><rect x="1.5" y="11" width="5.5" height="5.5"/><rect x="1.5" y="20" width="5.5" height="5.5"/><rect x="11" y="10.5" width="5.5" height="5.5"/></g><path d="M4.2 7 V11 M4.2 16.5 V20 M7 13.5 H11" stroke="#555" stroke-width="1.2"/></svg>
<svg class="a" style="left:54px;top:229px" width="24" height="26" viewBox="0 0 24 26"><path d="M1 3 q0-2 2-2 h4 l1.5 2 h6 v10 h-13.5 z" fill="#fdf59a" stroke="#6e6a3a" stroke-width="1.3"/><path d="M1 5 h13.5" stroke="#b8b060" stroke-width="1"/><path d="M5 8 q0-2 2-2 h4 l1.5 2 h6 v10 h-13.5 z" fill="#fdf59a" stroke="#6e6a3a" stroke-width="1.3"/><path d="M5 10 h13.5" stroke="#b8b060" stroke-width="1"/><path d="M9 13 q0-2 2-2 h4 l1.5 2 h6 v10 h-13.5 z" fill="#fdf59a" stroke="#6e6a3a" stroke-width="1.3"/><path d="M9 15 h13.5" stroke="#b8b060" stroke-width="1"/></svg>
<svg class="a" style="left:91px;top:232px" width="24" height="22" viewBox="0 0 24 22"><path d="M1.5 4 q0-2.5 2.5-2.5 h5 l2 2.5 h9.5 v16 h-19 z" fill="#fbe85a" stroke="#6e6a3a" stroke-width="1.5"/><path d="M1.5 6.5 h19" stroke="#c8b840" stroke-width="1"/><g stroke="#1a3ad0" stroke-width="1.5"><path d="M11 8 v9 M6.5 12.5 h9 M7.8 9.3 l6.4 6.4 M14.2 9.3 l-6.4 6.4"/></g><circle cx="11" cy="12.5" r="2" fill="#1a3ad0"/></svg>
<svg class="a" style="left:392px;top:265px" width="26" height="27" viewBox="0 0 26 27"><path d="M2 7 L10 4 L14 6 L13 9 L8 9 Z" fill="#ddd" stroke="#666" stroke-width="1"/><rect x="8" y="8" width="4" height="17" fill="#f4a020" stroke="#8a5a10" stroke-width="1"/><rect x="8.5" y="20" width="3" height="5" fill="#e05010"/><path d="M17 9 V25 h4 V9" fill="#3a78d8" stroke="#1a3a80" stroke-width="1"/><path d="M15 3 q4 -2 8 0 l-1 3 h-2 v3 h-2 v-3 h-2 z" fill="#aaa" stroke="#555" stroke-width="1"/></svg>
<div class="a" style="left:427px;top:275px;border-left:4px solid transparent;border-right:4px solid transparent;border-top:5px solid #333"></div>
<svg class="a" style="left:446px;top:266px" width="22" height="25" viewBox="0 0 22 25"><path d="M1.5 1.5 H15 L20.5 7 V23.5 H1.5 Z" fill="#fcfcf4" stroke="#444" stroke-width="1.3"/><path d="M15 1.5 V7 H20.5" fill="none" stroke="#444" stroke-width="1"/><circle cx="5.5" cy="7" r="1.8" fill="#555"/><circle cx="5.5" cy="13" r="1.8" fill="#777"/><circle cx="5.5" cy="19" r="1.8" fill="#999"/><path d="M9 7 h5 M9 13 h8 M9 19 h8" stroke="#666" stroke-width="1.2"/></svg>
<div class="a" style="left:480px;top:275px;border-left:4px solid transparent;border-right:4px solid transparent;border-top:5px solid #333"></div>
<svg class="a" style="left:17px;top:301px" width="17" height="17" viewBox="0 0 17 17"><path d="M1 4 L4 1 H16 V13 L13 16 H1 Z" fill="#7ad8e0"/><path d="M13 4 L16 1 V13 L13 16 Z" fill="#3d8d96"/><path d="M1 4 L4 1 H16 L13 4 Z" fill="#b8f0f4"/><rect x="1.5" y="4.5" width="11.5" height="11" fill="#90eef4" stroke="#4a9aa0" stroke-width="1"/></svg>
<svg class="a" style="left:41px;top:327px" width="20" height="15" viewBox="0 0 20 15"><path d="M6 1.5 H19 L14 13.5 H1 Z" fill="#fffcf6" stroke="#8a5428" stroke-width="1.5"/></svg>
<svg class="a" style="left:41px;top:352px" width="20" height="15" viewBox="0 0 20 15"><path d="M6 1.5 H19 L14 13.5 H1 Z" fill="#fffcf6" stroke="#8a5428" stroke-width="1.5"/></svg>
<svg class="a" style="left:41px;top:377px" width="20" height="15" viewBox="0 0 20 15"><path d="M6 1.5 H19 L14 13.5 H1 Z" fill="#fffcf6" stroke="#8a5428" stroke-width="1.5"/></svg>
<svg class="a" style="left:40px;top:399px" width="22" height="22" viewBox="0 0 22 22"><g stroke="#8a5020" stroke-width="1.6" fill="none"><path d="M1 11.5 H16 M15.5 1 L5 21 M8 6 L15 20"/></g><g stroke="#666" stroke-width="1.3" fill="none"><path d="M1.5 1.5 l2.5 3 l2.5 -3 M4 4.5 v2 M1.5 16 h5 l-5 4 h5 M16.5 9 l4 4.5 M20.5 9 l-4 4.5"/></g></svg>
<svg class="a" style="left:41px;top:424px" width="20" height="20" viewBox="0 0 20 20"><path d="M5.5 10 L11 3 M11 16 L16.5 9" stroke="#777" stroke-width="1.2" stroke-dasharray="2 1.5" fill="none"/><path d="M11 3.5 H17.5 V10" fill="none" stroke="#2f5a5a" stroke-width="2"/><path d="M11 4 H17 V10 L11 16" fill="#dff8fa" opacity=".6"/><rect x="1.5" y="9.5" width="8" height="8" fill="#8ef0f0" stroke="#3a8080" stroke-width="1.6"/></svg>
<svg class="a" style="left:41px;top:449px" width="20" height="20" viewBox="0 0 20 20"><path d="M5.5 10 L11 3 M11 16 L16.5 9" stroke="#777" stroke-width="1.2" stroke-dasharray="2 1.5" fill="none"/><path d="M11 3.5 H17.5 V10" fill="none" stroke="#2f5a5a" stroke-width="2"/><path d="M11 4 H17 V10 L11 16" fill="#dff8fa" opacity=".6"/><rect x="1.5" y="9.5" width="8" height="8" fill="#8ef0f0" stroke="#3a8080" stroke-width="1.6"/></svg>
<svg class="a" style="left:41px;top:474px" width="20" height="20" viewBox="0 0 20 20"><path d="M5.5 10 L11 3 M11 16 L16.5 9" stroke="#777" stroke-width="1.2" stroke-dasharray="2 1.5" fill="none"/><path d="M11 3.5 H17.5 V10" fill="none" stroke="#2f5a5a" stroke-width="2"/><path d="M11 4 H17 V10 L11 16" fill="#dff8fa" opacity=".6"/><rect x="1.5" y="9.5" width="8" height="8" fill="#8ef0f0" stroke="#3a8080" stroke-width="1.6"/></svg>
<svg class="a" style="left:41px;top:499px" width="20" height="20" viewBox="0 0 20 20"><path d="M5.5 10 L11 3 M11 16 L16.5 9" stroke="#777" stroke-width="1.2" stroke-dasharray="2 1.5" fill="none"/><path d="M11 3.5 H17.5 V10" fill="none" stroke="#2f5a5a" stroke-width="2"/><path d="M11 4 H17 V10 L11 16" fill="#dff8fa" opacity=".6"/><rect x="1.5" y="9.5" width="8" height="8" fill="#8ef0f0" stroke="#3a8080" stroke-width="1.6"/></svg>
<svg class="a" style="left:41px;top:524px" width="20" height="20" viewBox="0 0 20 20"><path d="M5.5 10 L11 3 M11 16 L16.5 9" stroke="#777" stroke-width="1.2" stroke-dasharray="2 1.5" fill="none"/><path d="M11 3.5 H17.5 V10" fill="none" stroke="#2f5a5a" stroke-width="2"/><path d="M11 4 H17 V10 L11 16" fill="#dff8fa" opacity=".6"/><rect x="1.5" y="9.5" width="8" height="8" fill="#8ef0f0" stroke="#3a8080" stroke-width="1.6"/></svg>
<svg class="a" style="left:41px;top:549px" width="20" height="20" viewBox="0 0 20 20"><path d="M5.5 10 L11 3 M11 16 L16.5 9" stroke="#777" stroke-width="1.2" stroke-dasharray="2 1.5" fill="none"/><path d="M11 3.5 H17.5 V10" fill="none" stroke="#2f5a5a" stroke-width="2"/><path d="M11 4 H17 V10 L11 16" fill="#dff8fa" opacity=".6"/><rect x="1.5" y="9.5" width="8" height="8" fill="#8ef0f0" stroke="#3a8080" stroke-width="1.6"/></svg>
<svg class="a" style="left:41px;top:574px" width="20" height="20" viewBox="0 0 20 20"><path d="M5.5 10 L11 3 M11 16 L16.5 9" stroke="#777" stroke-width="1.2" stroke-dasharray="2 1.5" fill="none"/><path d="M11 3.5 H17.5 V10" fill="none" stroke="#2f5a5a" stroke-width="2"/><path d="M11 4 H17 V10 L11 16" fill="#dff8fa" opacity=".6"/><rect x="1.5" y="9.5" width="8" height="8" fill="#8ef0f0" stroke="#3a8080" stroke-width="1.6"/></svg>
<svg class="a" style="left:41px;top:599px" width="20" height="20" viewBox="0 0 20 20"><path d="M5.5 10 L11 3 M11 16 L16.5 9" stroke="#777" stroke-width="1.2" stroke-dasharray="2 1.5" fill="none"/><path d="M11 3.5 H17.5 V10" fill="none" stroke="#2f5a5a" stroke-width="2"/><path d="M11 4 H17 V10 L11 16" fill="#dff8fa" opacity=".6"/><rect x="1.5" y="9.5" width="8" height="8" fill="#8ef0f0" stroke="#3a8080" stroke-width="1.6"/></svg>
<svg class="a" style="left:43px;top:626px" width="16" height="16" viewBox="0 0 16 16"><path d="M1 5.5 H7 V1.5 L14.5 8 L7 14.5 V10.5 H1 Z" fill="#e01818" stroke="#901010" stroke-width="1"/></svg>
<div class="a" style="left:501px;top:207px;width:1224px;height:777px;background:linear-gradient(#c5daea,#5e7eab)"></div>
<div class="a" style="left:934px;top:216px;width:353px;height:35px;background:#f4f4f4;border:1px solid #d8dde4"></div>
<div class="a" style="left:941px;top:217px;width:33px;height:33px;background:#fdfdfd"></div>
<div class="a" style="left:975px;top:217px;width:33px;height:33px;background:#fdfdfd"></div>
<div class="a" style="left:1009px;top:217px;width:32px;height:33px;background:#fdfdfd"></div>
<div class="a" style="left:1042px;top:217px;width:33px;height:33px;background:#fdfdfd"></div>
<div class="a" style="left:1076px;top:217px;width:34px;height:33px;background:#fdfdfd"></div>
<div class="a" style="left:1111px;top:217px;width:34px;height:33px;background:#fdfdfd"></div>
<div class="a" style="left:1146px;top:217px;width:33px;height:33px;background:#fdfdfd"></div>
<div class="a" style="left:1180px;top:217px;width:34px;height:33px;background:#fdfdfd"></div>
<div class="a" style="left:1215px;top:217px;width:33px;height:33px;background:#fdfdfd"></div>
<div class="a" style="left:1249px;top:217px;width:32px;height:33px;background:#fdfdfd"></div>
<div class="a" style="left:940px;top:217px;width:1px;height:33px;background:#dcdcdc"></div>
<div class="a" style="left:974px;top:217px;width:1px;height:33px;background:#dcdcdc"></div>
<div class="a" style="left:1008px;top:217px;width:1px;height:33px;background:#dcdcdc"></div>
<div class="a" style="left:1041px;top:217px;width:1px;height:33px;background:#dcdcdc"></div>
<div class="a" style="left:1075px;top:217px;width:1px;height:33px;background:#dcdcdc"></div>
<div class="a" style="left:1110px;top:217px;width:1px;height:33px;background:#dcdcdc"></div>
<div class="a" style="left:1145px;top:217px;width:1px;height:33px;background:#dcdcdc"></div>
<div class="a" style="left:1179px;top:217px;width:1px;height:33px;background:#dcdcdc"></div>
<div class="a" style="left:1214px;top:217px;width:1px;height:33px;background:#dcdcdc"></div>
<div class="a" style="left:1248px;top:217px;width:1px;height:33px;background:#dcdcdc"></div>
<div class="a" style="left:1281px;top:217px;width:1px;height:33px;background:#dcdcdc"></div>
<svg class="a" style="left:946px;top:223px" width="23" height="22" viewBox="0 0 23 22"><rect x="2" y="1.5" width="17" height="17" fill="#fff" stroke="#2a4aa8" stroke-width="2.2"/><circle cx="10.5" cy="9.5" r="5" fill="#f4f4f4" stroke="#8a8a6a" stroke-width="1.6"/><path d="M14 13 L20 19.5" stroke="#7a4a3a" stroke-width="2.4"/></svg>
<svg class="a" style="left:980px;top:222px" width="23" height="23" viewBox="0 0 23 23"><circle cx="8.5" cy="9" r="7" fill="#fff" stroke="#777" stroke-width="1.4"/><path d="M8.5 5 V13 M4.5 9 H12.5" stroke="#111" stroke-width="2.4"/><path d="M13.5 14 L20 20.5" stroke="#7a5040" stroke-width="2.4"/></svg>
<svg class="a" style="left:1014px;top:222px" width="23" height="23" viewBox="0 0 23 23"><circle cx="8.5" cy="9" r="7" fill="#fff" stroke="#777" stroke-width="1.4"/><path d="M4.5 9 H12.5" stroke="#111" stroke-width="2.4"/><path d="M13.5 14 L20 20.5" stroke="#7a5040" stroke-width="2.4"/></svg>
<svg class="a" style="left:1049px;top:224px" width="20" height="20" viewBox="0 0 20 20"><defs><linearGradient id="rp" x1="0" y1="0" x2="1" y2="1"><stop offset="0" stop-color="#fff"/><stop offset="1" stop-color="#6a8ad8"/></linearGradient></defs><rect x="1" y="1" width="17" height="17.5" fill="url(#rp)" stroke="#2a4aa8" stroke-width="1.6"/><path d="M5 17 L14 8" stroke="#1a3a90" stroke-width="1.8"/><path d="M6 8 q3 -3 6 -1" fill="none" stroke="#aab" stroke-width="1"/></svg>
<svg class="a" style="left:1082px;top:225px" width="25" height="22" viewBox="0 0 25 22"><path d="M2 5.5 L6 1.5 H19 V13.5 L15 17.5" fill="#50c8c0"/><path d="M2 5.5 L6 1.5 H19 L15 5.5Z" fill="#8ee8f0"/><rect x="2" y="5.5" width="13" height="12" fill="#fff" stroke="#111" stroke-width="1.8"/><path d="M2 5.5 L6 1.5 H19 V13.5 L15 17.5 M15 5.5 L19 1.5" fill="none" stroke="#111" stroke-width="1.6"/><path d="M24 18 V21.5 H20.5Z" fill="#555"/></svg>
<svg class="a" style="left:1116px;top:223px" width="27" height="25" viewBox="0 0 27 25"><path d="M3 8 Q3 5 6 5 H8 M3 8 V17 H12 Q15 17 15 14" fill="none" stroke="#6aa0a0" stroke-width="1.6"/><text x="10" y="9.5" font-family="Liberation Sans" font-size="10" font-weight="bold" fill="#333">AB</text><path d="M26 21 V24.5 H22.5Z" fill="#555"/></svg>
<svg class="a" style="left:1151px;top:223px" width="23" height="22" viewBox="0 0 23 22"><path d="M2 1.5 H17 V6" fill="none" stroke="#666" stroke-width="1.3"/><path d="M2 1.5 V19" stroke="#777" stroke-width="1.2" stroke-dasharray="2 1"/><rect x="4.5" y="8" width="16" height="11.5" rx="2" fill="#999" stroke="#333" stroke-width="1.3"/><rect x="8" y="6" width="6" height="3" fill="#666"/><circle cx="12.5" cy="13.8" r="3.6" fill="#fff" stroke="#222" stroke-width="1.6"/></svg>
<svg class="a" style="left:1185px;top:223px" width="27" height="24" viewBox="0 0 27 24"><g stroke="#9a4a20" stroke-width="2"><path d="M1.5 1.5 L6.5 6.5 M6.5 1.5 L1.5 6.5 M9.5 14 L17.5 22 M17.5 12 L9 22 M10 14.5 H20"/></g><path d="M11.5 1 L3.5 20" stroke="#9a4a20" stroke-width="1.8" stroke-dasharray="3 3"/><path d="M26 19 V22.5 H22.5Z" fill="#555"/></svg>
<svg class="a" style="left:1220px;top:223px" width="24" height="23" viewBox="0 0 24 23"><rect x="1" y="1" width="11.5" height="6" fill="#f4f09a" stroke="#777" stroke-width="1"/><path d="M12 5 H18 L12 13 H18" fill="none" stroke="#222" stroke-width="1.6"/><path d="M5 20 Q14 10 22 20 Q14 24 5 20Z" fill="#9a9a9a" stroke="#666" stroke-width="1"/><circle cx="13.5" cy="18" r="2" fill="#ccc"/></svg>
<svg class="a" style="left:1252px;top:221px" width="24" height="24" viewBox="0 0 24 24"><path d="M6 6 L11 12 H19 M11 12 L6 19" stroke="#8090a0" stroke-width="1.4" fill="none"/><circle cx="6" cy="5.5" r="3.8" fill="#20b020" stroke="#106010" stroke-width=".8"/><circle cx="19.5" cy="12" r="3.8" fill="#e01818" stroke="#801010" stroke-width=".8"/><circle cx="6" cy="19" r="3.8" fill="#20c8d8" stroke="#107080" stroke-width=".8"/></svg>
<svg class="a" style="left:0;top:0;overflow:visible" width="1735" height="1030" viewBox="0 0 1735 1030"><polygon points="978.8,598.9 1050.2,568.6 1101.5,526.6 1152.0,525.0 1184.3,524.3 1223.1,561.6 1316.4,587.2 1334.2,626.9 1349.8,675.0 1351.5,700.3 1343.5,733.9 1329.0,754.7 1314.7,774.0 1260.0,774.7 1227.5,781.6 1213.6,790.0 1199.8,802.3 1186.0,813.4 1172.0,819.0 1158.3,821.0 1131.9,821.8 1116.8,821.7 1103.0,819.0 1089.0,810.6 1078.0,799.6 1065.6,791.3 1047.7,785.0 1020.0,784.4 976.8,785.1 959.2,738.7 952.8,729.0 944.8,697.0 947.0,668.0 960.2,629.9" fill="#2f3336" stroke="#283040" stroke-width="1" stroke-linejoin="round"/><polygon points="1031.3,709.8 1071.3,746.7 1086.4,790.0 1109.9,791.3 1119.6,821.7 1116.8,821.7 1103.0,819.0 1089.0,810.6 1078.0,799.6 1065.6,791.3 1047.7,751.0" fill="#383b40" stroke="none" stroke-width="0" stroke-linejoin="round"/><polygon points="1156.0,743.5 1204.9,704.3 1216.4,747.7 1205.3,758.1 1213.6,788.5 1213.6,790.0 1199.8,802.3 1186.0,813.4 1172.0,819.0 1161.0,820.3 1151.4,790.0 1169.4,788.5" fill="#36393e" stroke="none" stroke-width="0" stroke-linejoin="round"/><polygon points="1298.7,726.7 1316.0,711.5 1332.0,689.0 1337.0,665.0 1338.0,645.0 1334.2,626.9 1334.2,626.9 1349.8,675.0 1351.5,700.3 1343.5,733.9 1329.0,754.7 1314.7,774.0 1313.0,770.8" fill="#40434a" stroke="none" stroke-width="0" stroke-linejoin="round"/><polygon points="1028.3,752.6 1047.0,753.0 1055.0,760.0 1064.0,775.0 1067.0,791.0 1047.7,785.0 1038.0,784.5" fill="#34373c" stroke="none" stroke-width="0" stroke-linejoin="round"/><polygon points="1205.3,758.1 1216.4,747.7 1240.0,746.3 1249.6,774.7 1227.5,781.6 1213.6,790.0 1213.6,788.5" fill="#34373c" stroke="none" stroke-width="0" stroke-linejoin="round"/><polyline points="1031.3,709.8 1047.7,751.0 1055.0,760.0 1064.0,775.0 1067.0,791.0" fill="none" stroke="#22262c" stroke-width="0.9"/><polyline points="1071.3,746.7 1086.4,790.0 1109.9,791.3 1119.6,821.7" fill="none" stroke="#22262c" stroke-width="0.9"/><polyline points="1156.0,743.5 1169.4,788.5 1151.4,790.0 1161.0,820.3" fill="none" stroke="#22262c" stroke-width="0.9"/><polyline points="1169.4,788.5 1184.6,776.0 1194.3,803.7" fill="none" stroke="#22262c" stroke-width="0.9"/><polyline points="1204.9,704.3 1216.4,747.7 1240.0,746.3 1249.6,774.7" fill="none" stroke="#22262c" stroke-width="0.9"/><polyline points="1205.3,758.1 1216.4,747.7" fill="none" stroke="#22262c" stroke-width="0.9"/><polyline points="1205.3,758.1 1213.6,788.5" fill="none" stroke="#22262c" stroke-width="0.9"/><polyline points="1298.7,726.7 1313.0,770.8" fill="none" stroke="#22262c" stroke-width="0.9"/><polyline points="1028.3,752.6 1047.0,753.0" fill="none" stroke="#22262c" stroke-width="0.9"/><polyline points="1028.3,752.6 1038.0,783.0" fill="none" stroke="#22262c" stroke-width="0.9"/><path d="M1042,755 q4 0 7 3" stroke="#c8ccd0" stroke-width="1" fill="none"/><path d="M1214,751 q4 -2 7 -2" stroke="#c8ccd0" stroke-width="1" fill="none"/><polygon points="978.8,598.9 1050.2,568.6 1037.0,675.0 1031.3,709.8 959.2,738.7 952.8,729.0 944.8,697.0 947.0,668.0 960.2,629.9" fill="#96a0aa" stroke="#283040" stroke-width="1" stroke-linejoin="round"/><polygon points="1050.2,568.6 1101.5,526.6 1152.0,525.0 1184.3,524.3 1223.1,561.6 1208.4,675.0 1204.9,704.3 1156.0,743.5 1071.3,746.7 1031.3,709.8 1037.0,675.0" fill="#96a0aa" stroke="#283040" stroke-width="1" stroke-linejoin="round"/><polygon points="1223.1,561.6 1316.4,587.2 1334.2,626.9 1338.0,645.0 1337.0,665.0 1332.0,689.0 1316.0,711.5 1298.7,726.7 1204.9,704.3 1208.4,675.0" fill="#888f99" stroke="#283040" stroke-width="1" stroke-linejoin="round"/><path d="M1014.5,598.1 C1019,598 1023,602 1021.5,607 C1016,620 1006,640 1002,655 C999,668 1001,680 1010.5,692.2 C1008,703 998,712 991.3,712.3 C985,711 979,700 976.8,689 C975,670 978,650 985,633 C992,615 1005,598 1014.5,598.1 Z" fill="#393c41" stroke="#283040" stroke-width="1" stroke-linejoin="round"/><polyline points="999.5,611 1007,624" fill="none" stroke="#22262c" stroke-width="0.9"/><path d="M999,687 L1010.5,692.2 C1008,700 1003,707 996,710 C997,702 998,694 999,687 Z" fill="#84a0c2" stroke="#283040" stroke-width="0.8" stroke-linejoin="round"/><path d="M1267.4,589.6 C1275,590 1286,606 1292.3,620.7 C1297,632 1299,648 1297,665 C1295,680 1288,692 1279.4,698 C1272,702 1262,704 1255.4,702.7 C1248,701 1242,694 1241,685.8 C1243,679 1256,672 1262,664 C1266,650 1265,630 1262.7,616 C1260,608 1253,600 1253.4,595.8 C1256,591 1262,589 1267.4,589.6Z" fill="url(#rsg)" stroke="#283040" stroke-width="1" stroke-linejoin="round"/><path d="M1241,685.8 C1243,679 1256,672 1262,664 L1266,700 C1258,704 1250,702 1244,696 Z" fill="#3a3d42" stroke="none" stroke-width="0" stroke-linejoin="round"/><path d="M1280,650 L1297.5,648 C1298,662 1295,676 1286,684 C1284,672 1282,660 1280,650Z" fill="#88a4c5" stroke="none" stroke-width="0" stroke-linejoin="round"/><path d="M1134.1,535.2 C1160,534 1185,545 1193,565 C1197,580 1195,600 1194.4,606 L1185,690 C1180,715 1150,736 1108,735.5 C1085,734 1068,722 1062,705 C1058,690 1059,675 1062,650 L1068.9,623.7 C1072,600 1075,588 1078,578 C1088,550 1110,536 1134.1,535.2Z" fill="#2f3336" stroke="#283040" stroke-width="1" stroke-linejoin="round"/><defs><linearGradient id="ovg" x1="1075" y1="0" x2="1195" y2="0" gradientUnits="userSpaceOnUse"><stop offset="0" stop-color="#303337"/><stop offset=".45" stop-color="#3e4247"/><stop offset=".8" stop-color="#35383d"/><stop offset="1" stop-color="#2c2f33"/></linearGradient><linearGradient id="rsg" x1="1250" y1="0" x2="1298" y2="0" gradientUnits="userSpaceOnUse"><stop offset="0" stop-color="#2e3135"/><stop offset=".55" stop-color="#44484e"/><stop offset="1" stop-color="#2e3135"/></linearGradient></defs><path d="M1134.1,535.2 C1160,534 1185,545 1193,565 C1197,580 1195,600 1194.4,606 L1150,607 L1111,632 L1097,650 L1073.5,589.5 C1080,560 1105,537 1134.1,535.2Z" fill="url(#ovg)" stroke="none" stroke-width="0" stroke-linejoin="round"/><polyline points="1073.5,589.5 1096.8,648.5" fill="none" stroke="#22262c" stroke-width="0.9"/><path d="M1191.8,605.5 C1175,602 1150,604 1134.3,613.3 C1120,621 1106,638 1100.2,652 L1095.5,683.2 L1090.9,729.8 C1094,735 1100,736.5 1108,736.5 L1160,740 L1204,698 L1208.4,675 Z" fill="#96a0aa" stroke="none" stroke-width="0" stroke-linejoin="round"/><path d="M1191.8,605.5 C1175,602 1150,604 1134.3,613.3 C1120,621 1106,638 1100.2,652 L1095.5,683.2 L1090.9,729.8" fill="none" stroke="#283040" stroke-width="1" stroke-linejoin="round"/><clipPath id="gclip"><path d="M1131.2,633.5 C1138,626 1150,621 1160,620.5 C1172,620 1182,622 1188.7,627.3 L1187.1,652 L1182.5,683.2 C1180,695 1176,704 1173.2,708 C1166,718 1160,722 1154.5,726.6 C1148,730 1140,733 1134.3,734.4 L1108,734.4 L1111,714.2 L1114.2,691 L1117.3,667.6 L1120.4,649 Z"/></clipPath><path d="M1131.2,633.5 C1138,626 1150,621 1160,620.5 C1172,620 1182,622 1188.7,627.3 L1187.1,652 L1182.5,683.2 C1180,695 1176,704 1173.2,708 C1166,718 1160,722 1154.5,726.6 C1148,730 1140,733 1134.3,734.4 L1108,734.4 L1111,714.2 L1114.2,691 L1117.3,667.6 L1120.4,649 Z" fill="#2f3336" stroke="#283040" stroke-width="1" stroke-linejoin="round"/><g clip-path="url(#gclip)"><polygon points="1100,634.8 1200,633.8 1200,640.8 1100,641.5" fill="#96a0aa" stroke="#283040" stroke-width=".8"/><polygon points="1122,627.0 1200,626.5 1200,632.5 1124,633.0" fill="#94aecc" stroke="#283040" stroke-width=".6"/><polygon points="1100,657.3 1200,656.3 1200,663.3 1100,664.0" fill="#96a0aa" stroke="#283040" stroke-width=".8"/><polygon points="1116,649.5 1200,649.0 1200,655.0 1118,655.5" fill="#91abca" stroke="#283040" stroke-width=".6"/><polygon points="1100,679.1 1200,678.1 1200,685.1 1100,685.8" fill="#96a0aa" stroke="#283040" stroke-width=".8"/><polygon points="1116,671.3 1200,670.8 1200,676.8 1118,677.3" fill="#8ea9c8" stroke="#283040" stroke-width=".6"/><polygon points="1100,700.8 1200,699.8 1200,706.8 1100,707.5" fill="#96a0aa" stroke="#283040" stroke-width=".8"/><polygon points="1116,693.0 1200,692.5 1200,698.5 1118,699.0" fill="#8ba6c6" stroke="#283040" stroke-width=".6"/><polygon points="1100,722.5 1200,721.5 1200,728.5 1100,729.2" fill="#96a0aa" stroke="#283040" stroke-width=".8"/><polygon points="1116,714.7 1200,714.2 1200,720.2 1118,720.7" fill="#88a4c5" stroke="#283040" stroke-width=".6"/></g></svg>
<div class="a" style="left:5px;top:984px;width:1725px;height:2px;background:#a0a0a2"></div>
<div class="a" style="left:5px;top:986px;width:1725px;height:39px;background:#efeff1"></div>
<div class="a" style="left:13px;top:993px;width:28px;height:27px;background:linear-gradient(#f4f4f4,#e4e4e4);border:1px solid #c8c8c8;border-top:2px solid #a8a8a0"></div>
<svg class="a" style="left:18px;top:996px" width="20" height="22" viewBox="0 0 20 22"><g fill="#fff" stroke="#1a2a50" stroke-width="1.8"><rect x="2" y="1.5" width="4.5" height="4.5"/><rect x="2" y="9" width="4.5" height="4.5"/><rect x="2" y="16.5" width="4.5" height="4.5"/><rect x="11" y="9" width="4.5" height="4.5"/></g><path d="M4.2 6 V9 M4.2 13.5 V16.5 M6.5 11.2 H11" stroke="#1a2a50" stroke-width="1.2"/></svg>
<div class="a" style="left:45px;top:993px;width:27px;height:27px;background:linear-gradient(#fafafa,#ececec);border:1px solid #c8c8c8"></div>
<svg class="a" style="left:47px;top:995px" width="23" height="23" viewBox="0 0 23 23"><ellipse cx="11.5" cy="11.5" rx="9" ry="8" fill="#2a9ad8"/><path d="M4 8 Q8 2 14 3 Q10 7 6 14 Z" fill="#20b040"/><path d="M12 14 Q16 10 20 9 Q19 16 13 19Z" fill="#30c060"/><path d="M2 20 Q10 16 21 3" fill="none" stroke="#f0c020" stroke-width="2.6"/><path d="M3 19 L6 21" stroke="#e08010" stroke-width="2"/></svg>
<div class="a" style="left:84px;top:991px;width:1px;height:30px;background:#d8d8d8"></div>
<div class="a" style="left:1235px;top:991px;width:1px;height:30px;background:#dadada"></div>
<div class="a" style="left:1280px;top:991px;width:1px;height:30px;background:#dadada"></div>
<div class="a" style="left:1320px;top:991px;width:1px;height:30px;background:#dadada"></div>
<div class="a" style="left:1378px;top:991px;width:1px;height:30px;background:#dadada"></div>
<div class="a" style="left:1286px;top:1000px;width:12px;height:12px;border-radius:50%;background:#3ac83a"></div>
<div class="a" style="left:1300px;top:1003px;width:6px;height:6px;border-radius:50%;background:#d4d4d4"></div>
<div class="a" style="left:1310px;top:1003px;width:6px;height:6px;border-radius:50%;background:#d4d4d4"></div>
<div class="a" style="left:1325px;top:992px;width:50px;height:27px;background:linear-gradient(#fdfdfd,#ececec);border:1px solid #b8b8b8;border-radius:3px"></div>
<svg class="a" style="left:1339px;top:996px" width="22" height="19" viewBox="0 0 22 19"><path d="M3 6 V16 H9 V6 Z M13 6 V16 H19 V6 Z" fill="#222"/><rect x="5" y="2" width="3.5" height="5" fill="#222"/><rect x="13.5" y="2" width="3.5" height="5" fill="#222"/><rect x="8.5" y="7" width="5" height="5" fill="#444"/><path d="M4 13 h4 M14 13 h4" stroke="#ddd" stroke-width="1.2"/></svg>
<div class="a" style="left:1500px;top:994px;width:207px;height:24px;background:linear-gradient(#fcfcfc,#f2f2f2);border:1px solid #c0c0c0"></div>
<div class="a" style="left:1688px;top:995px;width:1px;height:22px;background:#c8c8c8"></div>
<div class="a" style="left:1693px;top:1003px;border-left:5px solid transparent;border-right:5px solid transparent;border-top:7px solid #333"></div>
<div class="t" style="left:1506px;top:997px;color:#333">智能</div>
</body></html>
